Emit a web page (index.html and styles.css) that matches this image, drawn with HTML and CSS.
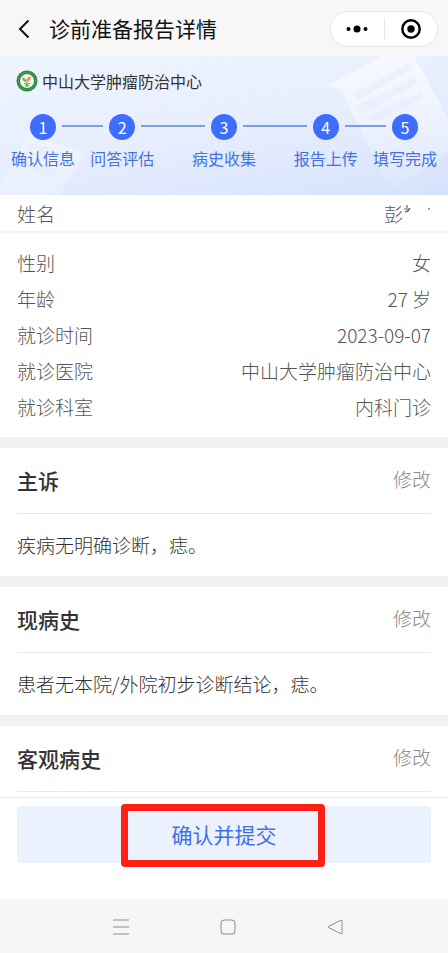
FILE: index.html
```html
<!DOCTYPE html>
<html lang="zh-CN">
<head>
<meta charset="UTF-8">
<meta name="viewport" content="width=device-width, initial-scale=1">
<title>诊前准备报告详情</title>
<link rel="stylesheet" href="styles.css">
</head>
<body>
<div class="page">
	<header class="navbar">
		<button class="back" type="button" aria-label="返回">
			<svg width="12" height="20" viewBox="0 0 12 20"><path d="M10.500 1.500L2 10l8.500 8.500" fill="none" stroke="#111" stroke-width="2"/></svg>
		</button>
		<h1 class="navbar-title">诊前准备报告详情</h1>
		<div class="capsule">
			<button type="button" aria-label="更多">
				<svg width="22" height="8" viewBox="0 0 22 8"><circle cx="2.500" cy="4" r="2"/><circle cx="11" cy="4" r="3.500"/><circle cx="19.500" cy="4" r="2"/></svg>
			</button>
			<button type="button" aria-label="关闭">
				<svg width="20" height="20" viewBox="0 0 20 20"><circle cx="10" cy="10" r="8.700" fill="none" stroke="#000" stroke-width="2.400"/><circle cx="10" cy="10" r="3.700"/></svg>
			</button>
		</div>
	</header>

	<section class="hero">
		<svg class="hero-bg" viewBox="0 0 448 139" preserveAspectRatio="xMidYMid slice" aria-hidden="true">
			<defs>
				<linearGradient id="paper" x1="0" y1="0" x2="0" y2="1">
					<stop offset="0" stop-color="#fff" stop-opacity=".6"/>
					<stop offset="1" stop-color="#fff" stop-opacity=".1"/>
				</linearGradient>
			</defs>
			<path d="M324 32L382 0H414L448 62V95L397 131Q389 135 386 126L342 36Q334 29 324 32Z" fill="url(#paper)"/>
			<path d="M354 37L408 8L412 13L358 44ZM356 50L414 21L418 27L362 57ZM370 60L420 36L424 42L374 67Z" fill="#dfe8fd" opacity=".4"/>
			<path d="M30 77L84 97L60 139H0V128Z" fill="#fff" opacity=".25"/>
			<path d="M31 86L65 98L62 103L28 91ZM22 103L56 116L53 121L19 109Z" fill="#dfe8fd" opacity=".35"/>
		</svg>
		<div class="hospital">
			<svg width="22" height="22" viewBox="0 0 22 22" aria-hidden="true">
				<circle cx="11" cy="11" r="10.500" fill="#2c8b43"/>
				<circle cx="11" cy="11" r="8.500" fill="none" stroke="#6bb179" stroke-width="1" stroke-dasharray="1 1"/>
				<circle cx="11" cy="11" r="7" fill="#f7f9ee"/>
				<path d="M10.500 12Q6 11.500 6.500 7.500Q10 8 10.500 12Z" fill="#5fae58"/>
				<path d="M10.500 12Q9.500 7.500 14.800 6.200Q15.500 11 10.500 12Z" fill="#e29a4c"/>
				<path d="M8 13.500Q11 15 14 13.500M9 16H13M11 12V16" fill="none" stroke="#4d9c58"/>
			</svg>
			<span>中山大学肿瘤防治中心</span>
		</div>
		<div class="steps">
			<div class="step"><span class="step-num">1</span><span>确认信息</span></div>
			<i class="step-line"></i>
			<div class="step"><span class="step-num">2</span><span>问答评估</span></div>
			<i class="step-line"></i>
			<div class="step"><span class="step-num">3</span><span>病史收集</span></div>
			<i class="step-line"></i>
			<div class="step"><span class="step-num">4</span><span>报告上传</span></div>
			<i class="step-line"></i>
			<div class="step"><span class="step-num">5</span><span>填写完成</span></div>
		</div>
	</section>

	<main>
		<dl class="info">
			<div class="info-row info-name">
				<dt>姓名</dt>
				<dd>彭<svg width="28" height="18" viewBox="0 0 28 18" aria-hidden="true"><path d="M1 5H7M4 1V4M7 4Q6 7 2 8M5 6V8M26 4V6" fill="none" stroke="#666" stroke-width="1.200"/></svg></dd>
			</div>
			<div class="info-row"><dt>性别</dt><dd>女</dd></div>
			<div class="info-row"><dt>年龄</dt><dd>27 岁</dd></div>
			<div class="info-row"><dt>就诊时间</dt><dd>2023-09-07</dd></div>
			<div class="info-row"><dt>就诊医院</dt><dd>中山大学肿瘤防治中心</dd></div>
			<div class="info-row"><dt>就诊科室</dt><dd>内科门诊</dd></div>
		</dl>

		<section class="record">
			<div class="record-head"><h2>主诉</h2><button class="edit" type="button">修改</button></div>
			<p>疾病无明确诊断，痣。</p>
		</section>
		<section class="record">
			<div class="record-head"><h2>现病史</h2><button class="edit" type="button">修改</button></div>
			<p>患者无本院/外院初步诊断结论，痣。</p>
		</section>
		<section class="record">
			<div class="record-head"><h2>客观病史</h2><button class="edit" type="button">修改</button></div>
		</section>
	</main>

	<footer class="footer">
		<div class="submit-bar">
			<div class="submit-wrap">
				<button class="submit" type="button">确认并提交</button>
				<span class="mark"></span>
			</div>
		</div>
		<nav class="sysnav">
			<button type="button" aria-label="菜单">
				<svg width="16" height="16" viewBox="0 0 16 16"><path d="M0 1H16M0 8H16M0 15H16"/></svg>
			</button>
			<button type="button" aria-label="主页">
				<svg width="16" height="16" viewBox="0 0 16 16"><rect x="1" y="1" width="14" height="14" rx="3"/></svg>
			</button>
			<button type="button" aria-label="后退">
				<svg width="16" height="16" viewBox="0 0 16 16"><path d="M14 1.200Q15 .8 15 2V14Q15 15.200 14 14.800L1.500 8.500Q.5 8 1.500 7.500Z"/></svg>
			</button>
		</nav>
	</footer>
</div>
</body>
</html>
```
FILE: styles.css
```css
* {
	box-sizing: border-box;
	margin: 0;
	padding: 0;
}

body {
	font-family: "Noto Sans CJK SC", sans-serif;
	font-size: 19px;
	color: #333;
	background: #fff;
}

button {
	border: 0;
	background: none;
	font: inherit;
	color: inherit;
	cursor: pointer;
}

svg {
	display: block;
}

.page {
	display: flex;
	flex-direction: column;
	min-height: 100vh;
}

/* 顶部导航 */
.navbar {
	display: flex;
	align-items: center;
	height: 56px;
	padding: 2px 10px 0 18px;
	background: #f7f7f7;
}

.back {
	margin-right: 19px;
}

.navbar-title {
	flex: 1;
	padding-bottom: 2px;
	font-size: 21px;
	font-weight: 400;
	line-height: 30px;
	color: #111;
}

.capsule {
	display: flex;
	align-items: center;
	width: 108px;
	height: 36px;
	border: 1px solid #e6e6e6;
	border-radius: 18px;
	background: #fff;
}

.capsule button {
	flex: 1;
	display: flex;
	justify-content: center;
	align-items: center;
	height: 22px;
}

.capsule button + button {
	border-left: 1px solid #e6e6e6;
}

/* 医院和步骤 */
.hero {
	position: relative;
	height: 139px;
	padding-top: 13px;
	background: linear-gradient(170deg, #f0f4fe, #e7eefe 50%, #d6e2fc);
}

.hero-bg {
	position: absolute;
	top: 0;
	left: 0;
	width: 100%;
	height: 100%;
}

.hospital {
	position: relative;
	display: flex;
	align-items: center;
	gap: 4px;
	padding-left: 16px;
	font-size: 16px;
	line-height: 24px;
}

.steps {
	position: relative;
	display: grid;
	grid-template-columns: 64px 15fr 64px 37fr 64px 37fr 64px 15fr 64px;
	padding: 21px 11px 0;
	font-size: 16px;
	line-height: 24px;
	color: #4572de;
}

.step {
	display: flex;
	flex-direction: column;
	align-items: center;
	gap: 6px;
	white-space: nowrap;
}

.step-num {
	width: 26px;
	height: 26px;
	border-radius: 50%;
	background: #3d6dfb;
	color: #fff;
	line-height: 26px;
	text-align: center;
}

.step-line {
	height: 2px;
	margin: 11px -13px 0;
	background: #7a9fe4;
}

/* 基本信息 */
.info {
	padding-bottom: 13px;
	color: #555;
	font-weight: 300;
}

.info-row {
	display: flex;
	justify-content: space-between;
	align-items: center;
	height: 36px;
	padding: 0 17px;
}

.info-name {
	height: 38px;
	margin-bottom: 11px;
	border-bottom: 2px solid #f3f3f3;
}

.info-row dd {
	display: flex;
	align-items: center;
}

/* 病史 */
.record {
	border-top: 11px solid #f1f1f1;
}

.record-head {
	display: flex;
	justify-content: space-between;
	align-items: center;
	height: 66px;
	margin: 0 17px;
	border-bottom: 1px solid #e9e9e9;
}

.record h2 {
	padding-bottom: 2px;
	font-size: 21px;
	font-weight: 500;
}

.edit {
	padding-bottom: 4px;
	color: #888;
	font-weight: 300;
}

.record p {
	padding: 17px;
	line-height: 28px;
	font-weight: 300;
}

/* 底部 */
.footer {
	position: sticky;
	bottom: 0;
	margin-top: auto;
	background: #fff;
}

.submit-bar {
	padding: 8px 17px 36px;
	border-top: 1px solid #e9e9e9;
}

.submit-wrap {
	position: relative;
}

.submit {
	display: block;
	width: 100%;
	height: 57px;
	padding-bottom: 2px;
	border-radius: 4px;
	background: #ecf1fe;
	color: #4070e8;
	font-size: 21px;
}

.mark {
	position: absolute;
	top: -2px;
	bottom: -4px;
	left: 25%;
	width: 204px;
	border: 7px solid #ff2015;
	border-radius: 4px;
	pointer-events: none;
}

.sysnav {
	display: flex;
	justify-content: center;
	gap: 91px;
	height: 54px;
	padding: 2px 0 0 8px;
	background: #f6f6f6;
}

.sysnav svg {
	fill: none;
	stroke: #8c8c8c;
}
```
